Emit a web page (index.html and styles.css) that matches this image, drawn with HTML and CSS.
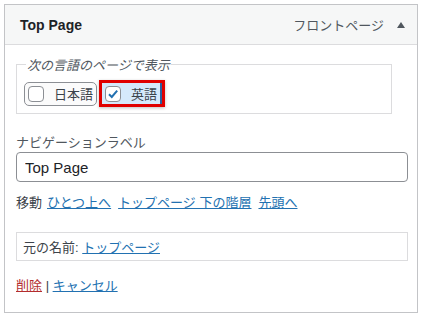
FILE: index.html
```html
<html>
    <head>
        <title>Menu item</title>
        <meta charset="utf-8">
        <link rel="stylesheet" href="styles.css">
    </head>
    <body>
        <div class="panel">
            <div class="panel-head">
                <span class="item-title">Top Page</span>
                <span class="item-type">フロントページ</span>
                <span class="toggle"></span>
            </div>
            <div class="panel-body">
                <fieldset class="langs">
                    <legend>次の言語のページで表示</legend>
                    <div class="lang-row">
                        <label class="lang">
                            <span class="box"></span>
                            <span>日本語</span>
                        </label>
                        <label class="lang active">
                            <span class="box checked">
                                <svg width="12" height="12" viewBox="0 0 12 12"><path d="M2 6.2 L4.8 9 L10.2 2.6" fill="none" stroke="#2271b1" stroke-width="2"/></svg>
                            </span>
                            <span>英語</span>
                        </label>
                    </div>
                </fieldset>

                <div class="field-label">ナビゲーションラベル</div>
                <input class="text-input" type="text" value="Top Page">

                <div class="move-row">
                    <span>移動</span>
                    <a href="#">ひとつ上へ</a>
                    <a href="#">トップページ 下の階層</a>
                    <a href="#">先頭へ</a>
                </div>

                <div class="original">元の名前: <a href="#">トップページ</a></div>

                <div class="actions">
                    <a class="delete" href="#">削除</a> | <a href="#">キャンセル</a>
                </div>
            </div>
        </div>
    </body>
</html>
```

FILE: styles.css
```css
html,
body {
    margin: 0;
    background-color: white;
}
body {
    padding: 4px;
    font-family: "Liberation Sans", "Noto Sans CJK JP", sans-serif;
    font-size: 13px;
    color: #3c434a;
}
a {
    color: #2271b1;
}
.panel {
    width: 412px;
    height: 307px;
    border: 1px solid #c3c4c7;
}
.panel-head {
    display: flex;
    align-items: center;
    height: 39px;
    padding: 0 12px 0 15px;
    background-color: #f6f7f7;
    border-bottom: 1px solid #dcdcde;
}
.item-title {
    flex: 1;
    font-size: 14px;
    font-weight: bold;
    color: #1d2327;
}
.item-type {
    color: #50575e;
    font-size: 13px;
}
.toggle {
    margin-left: 13px;
    width: 0;
    height: 0;
    border-left: 4px solid transparent;
    border-right: 4px solid transparent;
    border-bottom: 6px solid #50575e;
}
.panel-body {
    padding: 10px 9px 0 11px;
}
.langs {
    width: 357px;
    margin: 0;
    padding: 6px 10px 6px 7px;
    border: 1px solid #dcdcde;
}
legend {
    padding: 0 1px;
    margin-left: 2px;
    font-style: italic;
    color: #50575e;
}
.lang-row {
    display: flex;
    gap: 2px;
    align-items: center;
}
.lang {
    display: flex;
    align-items: center;
    gap: 10px;
    height: 22px;
    padding: 0 3px 0 3px;
    border: 1px solid #8c8f94;
    border-radius: 5px;
    background-color: #fbfbfb;
    color: #3c434a;
}
.lang.active {
    height: 21px;
    padding: 0 5px 0 3px;
    border: 3px solid #e00000;
    border-radius: 0;
    background-color: #d5e9fb;
    box-shadow: inset -2px 0 0 #2a5f9e, 0 1px 3px rgba(0, 0, 0, 0.25);
}
.box {
    display: flex;
    align-items: center;
    justify-content: center;
    width: 14px;
    height: 14px;
    border: 1px solid #8c8f94;
    border-radius: 4px;
    background-color: white;
}
.field-label {
    margin-top: 18px;
    color: #50575e;
}
.text-input {
    display: block;
    box-sizing: border-box;
    width: 392px;
    height: 30px;
    margin-top: 1px;
    padding: 0 8px;
    border: 1px solid #8c8f94;
    border-radius: 4px;
    font-family: "Liberation Sans", "Noto Sans CJK JP", sans-serif;
    font-size: 15px;
    color: #1d2327;
}
.move-row {
    display: flex;
    gap: 7px;
    margin-top: 10px;
}
.move-row span {
    margin-right: -2px;
}
.original {
    box-sizing: border-box;
    width: 392px;
    height: 29px;
    margin-top: 21px;
    padding: 4px 6px;
    border: 1px solid #dcdcde;
}
.actions {
    margin-top: 14px;
}
.delete {
    color: #b32d2e;
}
```
